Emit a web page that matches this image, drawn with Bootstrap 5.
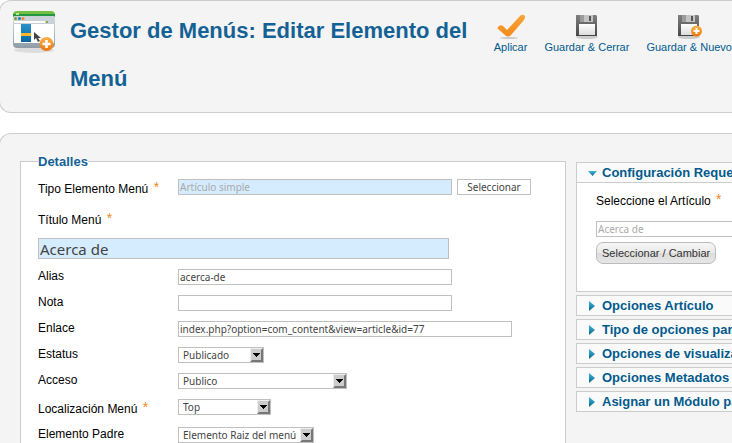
<!DOCTYPE html>
<html lang="es">
<head>
<meta charset="utf-8">
<meta name="viewport" content="width=device-width, initial-scale=1">
<title>Gestor de Menús: Editar Elemento del Menú</title>
<link href="https://cdn.jsdelivr.net/npm/bootstrap@5.3.0/dist/css/bootstrap.min.css" rel="stylesheet">
<style>
  body { font-family: "Liberation Sans", Arial, sans-serif; font-size: 12px; line-height: 18px; color: #000; background: #fff; }
  .panel { background: #f4f4f4; border: 1px solid #ccc; border-right: 0; margin-left: -1px; }
  .panel-head { border-radius: 12px 0 0 12px; padding: 6px 0 9px 12px; }
  .panel-main { border-radius: 12px 0 0 0; margin-top: 20px; padding: 16px 0 0 20px; }
  .page-title { font-size: 22px; line-height: 48px; font-weight: 700; color: #146295; }
  .title-icon { margin-top: 2px; }
  .toolbar { gap: 17px; padding-top: 6px; }
  .tool { font-size: 11px; line-height: 16px; color: #025a8d; white-space: nowrap; text-decoration: none; }
  .tool svg { overflow: visible; }
  .edit-grid { display: grid; grid-template-columns: minmax(0, 77fr) minmax(0, 22fr); column-gap: 10px; }
  .details { background: #fff; border: 1px solid #ccc; padding: 5px 17px 0; }
  .details legend { float: none; width: auto; margin: 0; padding-top: 2px; font-size: 13px; line-height: 20px; font-weight: 700; color: #146295; }
  .line { min-height: 26px; }
  .line-req { min-height: 28px; }
  .line-first { min-height: 31px; }
  .line > label { flex: 0 0 140px; }
  .req { line-height: 24px; }
  .star { color: #f08a1c; font-size: 14px; line-height: 12px; vertical-align: 1px; margin-left: 2px; }
  .field { font-family: "Noto Sans", sans-serif; font-size: 10px; line-height: 14px; height: 16px; padding: 0 1px; border: 1px solid #c0c0c0; border-radius: 0; background-color: #fff; color: #444; min-width: 0; }
  .line .field { margin-top: 2px; }
  .field:disabled { color: #aaa; opacity: 1; }
  .field.tint { background-color: #d5ecff; }
  .field-text { width: 274px; }
  .field-url { width: 334px; }
  .field-title { font-size: 15px; line-height: 19px; height: 21px; width: 411px; max-width: 100%; margin: 6px 0 8px; }
  .btn-plain { width: 74px; margin-left: 5px; text-align: center; }
  .pick { appearance: none; padding: 0 16px 0 4px; background: #fff url("data:image/svg+xml,%3Csvg xmlns='http://www.w3.org/2000/svg' width='13' height='14'%3E%3Cpath fill='%23ccc' d='M0 0h13v14H0z'/%3E%3Cpath fill='%23eee' d='M0 0h13v1H1v13H0z'/%3E%3Cpath fill='%23777' d='M13 0v14H0l2-2h9V2z'/%3E%3Cpath d='M3 5h7v1H9v1H8v1H7v1H6V8H5V7H4V6H3z'/%3E%3C/svg%3E") no-repeat right center; }
  .pick-s { width: 86px; }
  .pick-m { width: 93px; }
  .pick-l { width: 136px; }
  .pick-xl { width: 169px; }
  .options { padding-top: 12px; gap: 3px; }
  .slide { border: 1px solid #ccc; border-right: 0; background: #fafafa; overflow: hidden; }
  .slide-btn { width: 100%; border: 0; background: transparent; padding: 0 0 0 11px; height: 19px; font-size: 13px; line-height: 19px; font-weight: 700; color: #025a8d; white-space: nowrap; text-align: left; }
  .slide-btn svg { flex: none; }
  .slide-body { background: #fff; border-top: 1px solid #ccc; padding: 6px 0 27px 19px; }
  .slide-body .req { display: block; white-space: nowrap; line-height: 24px; }
  .field-article { width: 140px; margin: 8px 0 5px; display: block; }
  .btn-pill { font-size: 11px; line-height: 20px; padding: 0 5px; border: 1px solid #bbb; border-radius: 7px; color: #333; background: linear-gradient(#f6f6f6, #e9e9e9 50%, #dcdcdc 51%, #e6e6e6); white-space: nowrap; }
</style>
<script src="https://cdn.jsdelivr.net/npm/bootstrap@5.3.0/dist/js/bootstrap.bundle.min.js"></script>
</head>
<body class="d-flex flex-column vh-100 overflow-hidden">
<svg width="0" height="0" class="position-absolute" aria-hidden="true">
  <defs>
    <linearGradient id="orange" x2="0" y2="1"><stop stop-color="#fbb34a"/><stop offset="1" stop-color="#ee7410"/></linearGradient>
    <linearGradient id="tick" x2="0" y2="1"><stop stop-color="#f7a53a"/><stop offset="1" stop-color="#f48a1c"/></linearGradient>
    <linearGradient id="steel" x2="0" y2="1"><stop stop-color="#808080"/><stop offset="1" stop-color="#484848"/></linearGradient>
    <linearGradient id="paper" x2="0" y2="1"><stop stop-color="#fff"/><stop offset="1" stop-color="#dcdcdc"/></linearGradient>
    <linearGradient id="frame" x2="0" y2="1"><stop stop-color="#d5dde2"/><stop offset="1" stop-color="#8d9ca6"/></linearGradient>
    <linearGradient id="teal" x2="0" y2="1"><stop stop-color="#3fb6dc"/><stop offset="1" stop-color="#08658c"/></linearGradient>
    <linearGradient id="band" x2="0" y2="1"><stop stop-color="#2a93c9"/><stop offset="1" stop-color="#0a66a0"/></linearGradient>
    <symbol id="floppy" viewBox="0 0 32 26">
      <ellipse cx="16" cy="23" rx="11" ry="2" fill="#ccc"/>
      <path d="M5 1h20l1 1v20H5z" fill="url(#steel)"/>
      <path d="M9 1h13v7H9z" fill="#c4c4c4"/><path d="M9 1h4v7H9z" fill="#9b9b9b"/>
      <path d="M18 2h2v5h-2z" fill="#555"/>
      <path d="M8 10h16v11H8z" fill="url(#paper)"/>
      <path d="M5 21h21v1H5z" fill="#444"/>
    </symbol>
    <symbol id="arrow-right" viewBox="0 0 10 10"><path d="M1 0l6 5-6 5z" fill="url(#teal)"/></symbol>
  </defs>
</svg>

<header class="panel panel-head d-flex align-items-start">
  <svg class="title-icon flex-shrink-0" width="46" height="46" viewBox="0 0 46 46" aria-hidden="true">
    <ellipse cx="22" cy="41" rx="20" ry="3" fill="#ddd"/>
    <path d="M1 8h42v27q0 4-4 4H5q-4 0-4-4z" fill="url(#frame)"/>
    <path d="M1 8V6q0-4 4-4h34q4 0 4 4v2z" fill="#72bf44"/>
    <path d="M1 5h42v2H1z" fill="#239642"/>
    <path d="M4 4h3v2H4z" fill="#b9e68f"/>
    <path d="M2 7h40v7H2z" fill="#c9d2d7"/>
    <circle cx="3.500" cy="9.500" r="1.500" fill="#7a9f40"/><circle cx="7.500" cy="9.500" r="1.500" fill="#1680b3"/><circle cx="11" cy="9.500" r="1.500" fill="#ef8a2d"/>
    <path d="M2 12h31v2H2z" fill="#fff"/><path d="M34 12h2v2h-2z" fill="#8bad3a"/>
    <path d="M2 15h40v19H2z" fill="#fff"/>
    <path d="M9 15h10v18H9z" fill="url(#band)"/><path d="M9 24h10v3H9z" fill="#fcb72b"/>
    <path d="M22 23v8l2-2 2 4 2-1-2-3h3z" fill="#444"/>
    <circle cx="34.500" cy="35" r="7" fill="url(#orange)"/>
    <path d="M34.500 31v8M30.500 35h8" stroke="#fff" stroke-width="2.600"/>
  </svg>
  <h1 class="page-title flex-grow-1 mb-0 ps-2 ms-1">Gestor de Menús: Editar Elemento del Menú</h1>
  <nav class="toolbar d-flex flex-shrink-0 ps-4" aria-label="Acciones">
    <a class="tool d-flex flex-column align-items-center" href="#">
      <svg width="32" height="26" viewBox="0 0 32 26" aria-hidden="true"><ellipse cx="14" cy="25" rx="9" ry="1" fill="#ccc"/><path d="M3 14q2-3 5-1l4 4L25 3q2-2 4-1 2 2 0 5L16 22q-3 3-6 0L3 16q-1-1 0-2z" fill="url(#tick)"/></svg>
      Aplicar</a>
    <a class="tool d-flex flex-column align-items-center" href="#">
      <svg width="32" height="26" viewBox="0 0 32 26" aria-hidden="true"><use href="#floppy" y="1" width="32" height="26"/></svg>
      Guardar &amp; Cerrar</a>
    <a class="tool d-flex flex-column align-items-center" href="#">
      <svg width="32" height="26" viewBox="0 0 32 26" aria-hidden="true"><use href="#floppy" y="1" width="32" height="26"/><circle cx="23.500" cy="18" r="5.500" fill="url(#orange)"/><path d="M23.500 15v6M20.500 18h6" stroke="#fff" stroke-width="2"/></svg>
      Guardar &amp; Nuevo</a>
  </nav>
</header>

<main class="panel panel-main flex-grow-1">
  <form class="edit-grid">
    <fieldset class="details">
      <legend>Detalles</legend>
      <div class="line line-first d-flex align-items-start">
        <label class="req" for="tipo">Tipo Elemento Menú <span class="star">*</span></label>
        <input class="field field-text tint" id="tipo" type="text" value="Artículo simple" disabled>
        <button class="field btn-plain" type="button">Seleccionar</button>
      </div>
      <label class="req d-block" for="titulo">Título Menú <span class="star">*</span></label>
      <input class="field field-title tint d-block" id="titulo" type="text" value="Acerca de">
      <div class="line d-flex align-items-start">
        <label for="alias">Alias</label>
        <input class="field field-text" id="alias" type="text" value="acerca-de">
      </div>
      <div class="line d-flex align-items-start">
        <label for="nota">Nota</label>
        <input class="field field-text" id="nota" type="text">
      </div>
      <div class="line d-flex align-items-start">
        <label for="enlace">Enlace</label>
        <input class="field field-url" id="enlace" type="text" value="index.php?option=com_content&amp;view=article&amp;id=77" readonly>
      </div>
      <div class="line d-flex align-items-start">
        <label for="estatus">Estatus</label>
        <select class="field pick pick-s" id="estatus"><option>Publicado</option></select>
      </div>
      <div class="line d-flex align-items-start">
        <label for="acceso">Acceso</label>
        <select class="field pick pick-xl" id="acceso"><option>Publico</option></select>
      </div>
      <div class="line line-req d-flex align-items-start">
        <label class="req" for="localizacion">Localización Menú <span class="star">*</span></label>
        <select class="field pick pick-m" id="localizacion"><option>Top</option></select>
      </div>
      <div class="line d-flex align-items-start">
        <label for="padre">Elemento Padre</label>
        <select class="field pick pick-l" id="padre"><option>Elemento Raiz del menú</option></select>
      </div>
    </fieldset>

    <div class="options d-flex flex-column">
      <section class="slide">
        <button class="slide-btn d-flex align-items-center gap-1" type="button" aria-expanded="true">
          <svg width="10" height="10" viewBox="0 0 10 10" aria-hidden="true"><path d="M0 3h9L4.500 8z" fill="url(#teal)"/></svg>
          Configuración Requerida</button>
        <div class="slide-body">
          <label class="req" for="articulo">Seleccione el Artículo <span class="star">*</span></label>
          <input class="field field-article" id="articulo" type="text" value="Acerca de" disabled>
          <button class="btn-pill" type="button">Seleccionar / Cambiar</button>
        </div>
      </section>
      <section class="slide"><button class="slide-btn d-flex align-items-center gap-1" type="button"><svg width="10" height="10" aria-hidden="true"><use href="#arrow-right"/></svg>Opciones Artículo</button></section>
      <section class="slide"><button class="slide-btn d-flex align-items-center gap-1" type="button"><svg width="10" height="10" aria-hidden="true"><use href="#arrow-right"/></svg>Tipo de opciones para enlace</button></section>
      <section class="slide"><button class="slide-btn d-flex align-items-center gap-1" type="button"><svg width="10" height="10" aria-hidden="true"><use href="#arrow-right"/></svg>Opciones de visualización</button></section>
      <section class="slide"><button class="slide-btn d-flex align-items-center gap-1" type="button"><svg width="10" height="10" aria-hidden="true"><use href="#arrow-right"/></svg>Opciones Metadatos</button></section>
      <section class="slide"><button class="slide-btn d-flex align-items-center gap-1" type="button"><svg width="10" height="10" aria-hidden="true"><use href="#arrow-right"/></svg>Asignar un Módulo para este elemento</button></section>
    </div>
  </form>
</main>
</body>
</html>
